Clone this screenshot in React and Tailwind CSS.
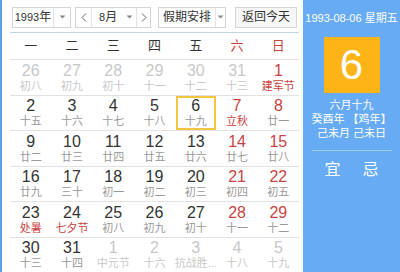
import React from "react";

const font = { fontFamily: '"Liberation Sans", "Noto Sans CJK SC", sans-serif' };

const rows = [
  [
    ["26", "初八", "g"], ["27", "初九", "g"], ["28", "初十", "g"], ["29", "十一", "g"], ["30", "十二", "g"], ["31", "十三", "g"], ["1", "建军节", "rf"],
  ],
  [
    ["2", "十五"], ["3", "十六"], ["4", "十七"], ["5", "十八"], ["6", "十九", "sel"], ["7", "立秋", "rf"], ["8", "廿一", "r"],
  ],
  [
    ["9", "廿二"], ["10", "廿三"], ["11", "廿四"], ["12", "廿五"], ["13", "廿六"], ["14", "廿七", "r"], ["15", "廿八", "r"],
  ],
  [
    ["16", "廿九"], ["17", "三十"], ["18", "初一"], ["19", "初二"], ["20", "初三"], ["21", "初四", "r"], ["22", "初五", "r"],
  ],
  [
    ["23", "处暑", "f"], ["24", "七夕节", "f"], ["25", "初八"], ["26", "初九"], ["27", "初十"], ["28", "十一", "r"], ["29", "十二", "r"],
  ],
  [
    ["30", "十三"], ["31", "十四"], ["1", "中元节", "g"], ["2", "十六", "g"], ["3", "抗战胜...", "g"], ["4", "十八", "g"], ["5", "十九", "g"],
  ],
];

function Arrow() {
  return (
    <svg width="7" height="4" viewBox="0 0 7 4">
      <path d="M0.5 0.5 L3.5 3.5 L6.5 0.5 Z" fill="#888" />
    </svg>
  );
}

function Cell({ d }) {
  const [n, l, t] = d;
  let numC = "text-[#333]";
  let lunC = "text-[#999]";
  if (t === "g") {
    numC = "text-[#c8c8c8]";
    lunC = "text-[#c8c8c8]";
  } else if (t === "r") {
    numC = "text-[#c94343]";
  } else if (t === "rf") {
    numC = "text-[#c94343]";
    lunC = "text-[#c94343]";
  } else if (t === "f") {
    lunC = "text-[#c94343]";
  }
  const sel = t === "sel";
  return (
    <div className="h-[34.5px] flex items-center justify-center">
      <div
        className={
          "w-[40px] h-[34px] flex flex-col items-center justify-center " +
          (sel ? "border-2 border-[#f5c342]" : "border-2 border-transparent")
        }
      >
        <div className={"text-[16px] leading-[17px] " + numC}>{n}</div>
        <div className={"text-[11px] leading-[13px] mt-[1px] whitespace-nowrap " + lunC}>{l}</div>
      </div>
    </div>
  );
}

export default function App() {
  const weeks = ["一", "二", "三", "四", "五", "六", "日"];
  return (
    <div className="w-[400px] h-[272px] flex bg-white overflow-hidden" style={font}>
      <div className="w-[303px] h-full border-l-2 border-[#5b9fe8] flex flex-col pl-[8px] pr-[4px]">
        <div className="h-[33px] flex items-center gap-[4px] pl-[2px] pt-[3px] text-[12px] text-[#333] whitespace-nowrap">
          <div className="w-[59px] h-[21px] border border-[#d5d5d5] flex items-stretch bg-white">
            <div className="w-[40px] flex items-center justify-center">
              <span className="text-[11px]">1993</span>
              <span>年</span>
            </div>
            <div className="flex-1 border-l border-[#e3e3e3] flex items-center justify-center">
              <Arrow />
            </div>
          </div>
          <div className="w-[76px] h-[21px] border border-[#d5d5d5] flex items-stretch bg-white">
            <div className="w-[15px] flex items-center justify-center text-[#666]">
              <svg width="6" height="9" viewBox="0 0 6 9"><path d="M5 0.5 L1 4.5 L5 8.5" stroke="#666" fill="none" strokeWidth="1" /></svg>
            </div>
            <div className="flex-1 border-l border-[#e3e3e3] flex items-center pl-[7px]">
              <span className="text-[11px]">8</span>
              <span>月</span>
            </div>
            <div className="w-[14px] flex items-center justify-center">
              <Arrow />
            </div>
            <div className="w-[14px] border-l border-[#e3e3e3] flex items-center justify-center">
              <svg width="6" height="9" viewBox="0 0 6 9"><path d="M1 0.5 L5 4.5 L1 8.5" stroke="#666" fill="none" strokeWidth="1" /></svg>
            </div>
          </div>
          <div className="ml-[3px] w-[68px] h-[21px] border border-[#d5d5d5] flex items-stretch bg-white">
            <div className="w-[56px] flex items-center justify-center">假期安排</div>
            <div className="flex-1 border-l border-[#e3e3e3] flex items-center justify-center">
              <Arrow />
            </div>
          </div>
          <div className="ml-[5px] w-[62px] h-[21px] border border-[#d5d5d5] bg-[#f7f7f7] flex items-center justify-center">
            返回今天
          </div>
        </div>
        <div className="border-t border-[#c5d3e3]" />
        <div className="grid grid-cols-7 h-[27px] items-center text-[13px]">
          {weeks.map((w, i) => (
            <div key={w} className={"text-center " + (i >= 5 ? "text-[#c94343]" : "text-[#333]")}>
              {w}
            </div>
          ))}
        </div>
        {rows.map((r, i) => (
          <div key={i} className="grid grid-cols-7 border-t border-[#e2e2e2]">
            {r.map((d, j) => (
              <Cell key={j} d={d} />
            ))}
          </div>
        ))}
      </div>
      <div className="flex-1 h-full bg-[#67abf5] flex flex-col items-center text-white">
        <div className="mt-[11px] text-[11px] leading-[14px] whitespace-nowrap">1993-08-06 星期五</div>
        <div className="mt-[12px] w-[56px] h-[56px] bg-[#fdb417] flex items-center justify-center text-[42px] leading-none">
          6
        </div>
        <div className="mt-[5px] text-[11px] leading-[14px] text-center">
          <div>六月十九</div>
          <div>癸酉年 【鸡年】</div>
          <div>己未月 己未日</div>
        </div>
        <div className="mt-[10px] w-[80px] border-t border-[#9ecbf8]" />
        <div className="mt-[9px] flex gap-[22px] text-[16px] leading-[20px]">
          <span>宜</span>
          <span>忌</span>
        </div>
      </div>
    </div>
  );
}
